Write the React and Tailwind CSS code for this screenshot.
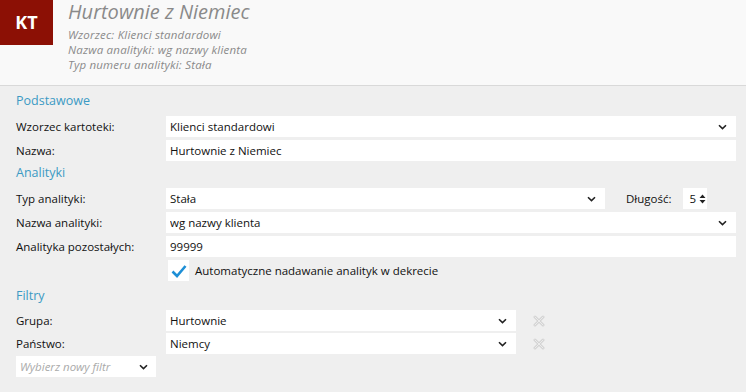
const font = { fontFamily: '"Open Sans", "Noto Sans", sans-serif' };

const Chevron = () => (
  <svg width="9" height="6" viewBox="0 0 9 6" className="shrink-0">
    <path d="M1 1.2 L4.5 4.6 L8 1.2" fill="none" stroke="#222" strokeWidth="1.6" />
  </svg>
);

const Field = ({ value, select, className = '' }) => (
  <div className={`h-[21px] bg-white flex items-center pl-[4px] pr-[9px] text-[11.5px] text-[#111] ${className}`}>
    <span className="flex-1 truncate">{value}</span>
    {select && <Chevron />}
  </div>
);

const Row = ({ label, gap = 'mt-[3px]', children }) => (
  <div className={`flex items-center h-[21px] ${gap}`}>
    <div className="w-[150px] shrink-0 text-[11.5px] text-[#111]">{label}</div>
    {children}
  </div>
);

const SectionTitle = ({ children, className = '' }) => (
  <div className={`text-[12.5px] text-[#3b9ac4] leading-[16px] ${className}`}>{children}</div>
);

const RemoveIcon = () => (
  <svg width="12" height="12" viewBox="0 0 12 12" className="ml-[17px]">
    <path d="M2 2 L10 10 M10 2 L2 10" stroke="#d4d4d4" strokeWidth="3" strokeLinecap="round" />
    <path d="M2 2 L10 10 M10 2 L2 10" stroke="#ececec" strokeWidth="1" strokeLinecap="round" />
  </svg>
);

export default function App() {
  return (
    <div className="w-[746px] h-[392px] bg-[#efefef] overflow-hidden" style={font}>
      {/* Header */}
      <div className="h-[86px] bg-[#f9f9f9] border-b border-[#d9d9d9] flex">
        <div className="w-[53px] h-[45px] bg-[#8c1005] text-white font-bold text-[18px] flex items-center justify-center">
          KT
        </div>
        <div className="ml-[15px] italic text-[#8a8a8a] pr-[4px]">
          <div className="text-[20px] leading-[26px] mt-[-1px]">Hurtownie z Niemiec</div>
          <div className="text-[11.5px] tracking-[0.2px] leading-[15px] mt-[2px]">Wzorzec: Klienci standardowi</div>
          <div className="text-[11.5px] tracking-[0.2px] leading-[15px]">Nazwa analityki: wg nazwy klienta</div>
          <div className="text-[11.5px] tracking-[0.2px] leading-[15px]">Typ numeru analityki: Stała</div>
        </div>
      </div>

      {/* Body */}
      <div className="flex flex-col pl-[16px] pr-[10px] pt-[7px]">
        <SectionTitle className="mb-[4px]">Podstawowe</SectionTitle>
        <Row label="Wzorzec kartoteki:">
          <Field value="Klienci standardowi" select className="flex-1" />
        </Row>
        <Row label="Nazwa:">
          <Field value="Hurtownie z Niemiec" className="flex-1" />
        </Row>
        <SectionTitle className="mt-[4px] mb-[4px]">Analityki</SectionTitle>
        <Row label="Typ analityki:">
          <Field value="Stała" select className="w-[439px]" />
          <div className="ml-[21px] w-[57px] text-[11.5px] text-[#111]">Długość:</div>
          <div className="w-[24px] h-[21px] bg-white flex items-center justify-end pr-[1px] text-[11.5px] text-[#111]">
            <span>5</span>
            <svg width="7" height="12" viewBox="0 0 7 12" className="ml-[3px]">
              <path d="M0.5 5 L3.5 1.5 L6.5 5 Z M0.5 7 L3.5 10.5 L6.5 7 Z" fill="#222" />
            </svg>
          </div>
        </Row>
        <Row label="Nazwa analityki:">
          <Field value="wg nazwy klienta" select className="flex-1" />
        </Row>
        <Row label="Analityka pozostałych:">
          <Field value="99999" className="flex-1" />
        </Row>
        <Row label="">
          <div className="ml-[2px] w-[21px] h-[21px] bg-white flex items-center justify-center">
            <svg width="16" height="14" viewBox="0 0 16 14">
              <path d="M1.5 7.5 L6 12 L14.5 2" fill="none" stroke="#1e8fd6" strokeWidth="2.6" />
            </svg>
          </div>
          <span className="ml-[6px] text-[11.5px] text-[#111]">Automatyczne nadawanie analityk w dekrecie</span>
        </Row>
        <SectionTitle className="mt-[7px] mb-[3px]">Filtry</SectionTitle>
        <Row label="Grupa:">
          <Field value="Hurtownie" select className="w-[350px]" />
          <RemoveIcon />
        </Row>
        <Row label="Państwo:" gap="mt-[2px]">
          <Field value="Niemcy" select className="w-[350px]" />
          <RemoveIcon />
        </Row>
        <div className="mt-[2px] w-[140px] h-[21px] bg-white flex items-center pl-[4px] pr-[8px] text-[11.5px] italic text-[#aaa]">
          <span className="flex-1">Wybierz nowy filtr</span>
          <Chevron />
        </div>
      </div>
    </div>
  );
}
